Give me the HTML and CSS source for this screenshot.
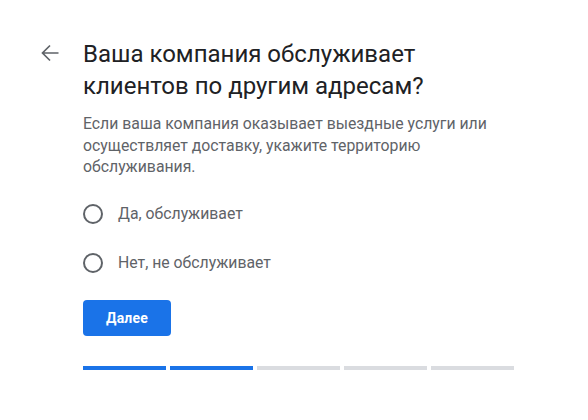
FILE: index.html
```html
<!DOCTYPE html>
<html lang="ru">
<head>
<meta charset="utf-8">
<link rel="stylesheet" href="styles.css">
</head>
<body>
<div class="page">
  <div class="back">
    <svg width="24" height="24" viewBox="0 0 24 24"><path d="M20.5 12H5M12 4.5L4.5 12l7.5 7.5" fill="none" stroke="#5f6368" stroke-width="1.7"/></svg>
  </div>
  <div class="content">
    <h1 class="title">Ваша компания обслуживает клиентов по другим адресам?</h1>
    <p class="desc">Если ваша компания оказывает выездные услуги или осуществляет доставку, укажите территорию обслуживания.</p>
    <div class="options">
      <label class="option"><span class="radio"></span><span class="label">Да, обслуживает</span></label>
      <label class="option"><span class="radio"></span><span class="label">Нет, не обслуживает</span></label>
    </div>
    <button class="next">Далее</button>
    <div class="progress">
      <span class="seg done"></span>
      <span class="seg done"></span>
      <span class="seg"></span>
      <span class="seg"></span>
      <span class="seg"></span>
    </div>
  </div>
</div>
</body>
</html>
```

FILE: styles.css
```css
html, body {
  margin: 0;
  padding: 0;
  background: #ffffff;
}
body {
  font-family: Roboto, "Noto Sans", Arial, sans-serif;
}
.page {
  display: flex;
  padding: 39px 0 0 38px;
}
.back {
  width: 45px;
  height: 28px;
  display: flex;
  align-items: center;
}
.back svg {
  display: block;
}
.content {
  width: 440px;
}
.title {
  margin: 0;
  font-size: 24px;
  line-height: 31.5px;
  font-weight: 400;
  color: #202124;
  width: 380px;
}
.desc {
  margin: 11px 0 0;
  font-size: 15.8px;
  line-height: 21.5px;
  color: #5f6368;
  width: 440px;
}
.options {
  margin-top: 22px;
  display: flex;
  flex-direction: column;
  gap: 21px;
}
.option {
  display: flex;
  align-items: center;
  height: 28px;
}
.radio {
  width: 16px;
  height: 16px;
  border: 2px solid #5f6368;
  border-radius: 50%;
  margin-right: 15px;
}
.label {
  font-size: 15.8px;
  color: #5f6368;
}
.next {
  display: block;
  margin-top: 23px;
  width: 88px;
  height: 36px;
  border: 0;
  border-radius: 4px;
  background: #1a73e8;
  color: #fff;
  font-family: Roboto, "Noto Sans", Arial, sans-serif;
  font-size: 14px;
  font-weight: 700;
  letter-spacing: 0.2px;
  padding: 0;
}
.progress {
  margin-top: 30px;
  display: flex;
  gap: 4px;
  width: 431px;
}
.seg {
  flex: 1;
  height: 4px;
  background: #dadce0;
}
.seg.done {
  background: #1a73e8;
}
```
